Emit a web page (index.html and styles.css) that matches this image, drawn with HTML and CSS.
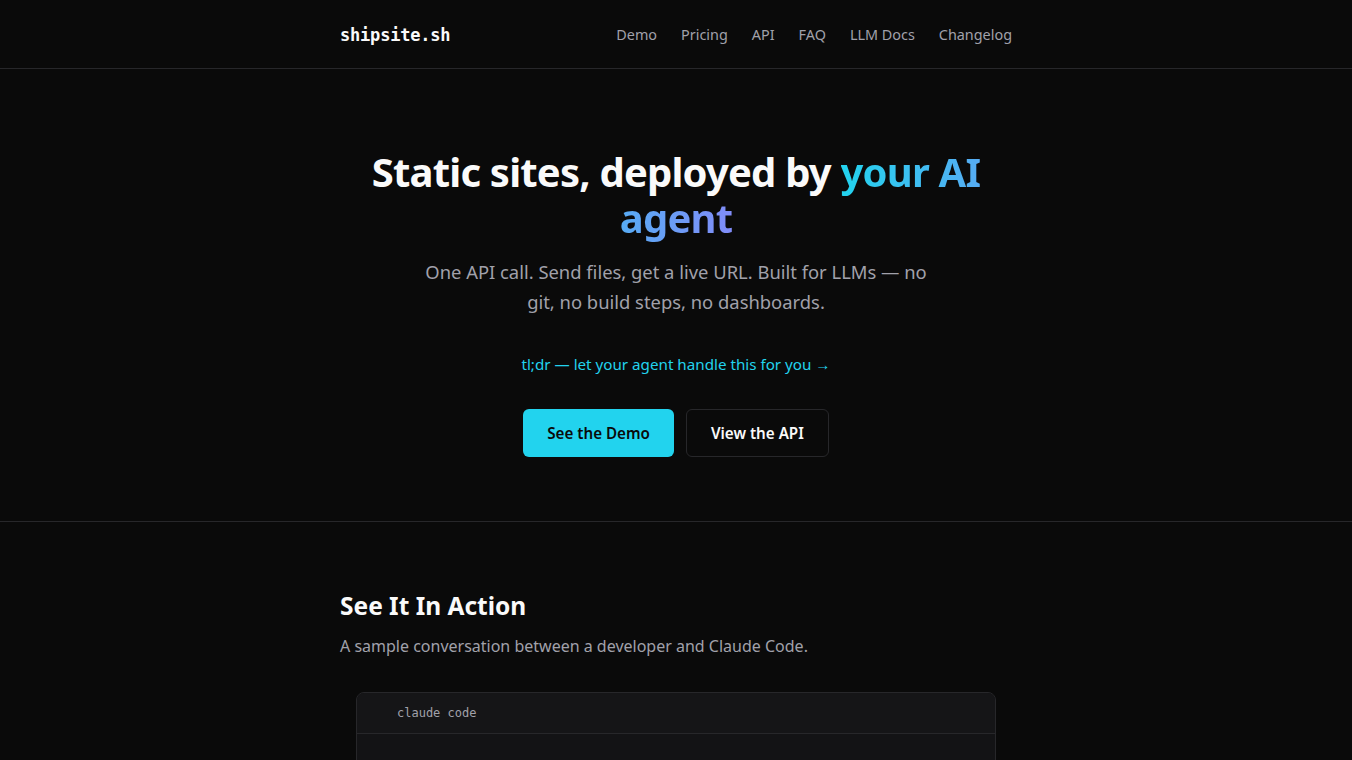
FILE: index.html
```html
<!DOCTYPE html>
<html lang="en">
<head>
<meta charset="utf-8">
<title>shipsite.sh — Static sites, deployed by your AI agent</title>
<link rel="stylesheet" href="styles.css">
</head>
<body>
<header class="site-header">
  <div class="container header-inner">
    <a class="logo" href="#">shipsite.sh</a>
    <nav class="nav">
      <a href="#demo">Demo</a>
      <a href="#pricing">Pricing</a>
      <a href="#api">API</a>
      <a href="#faq">FAQ</a>
      <a href="#llm-docs">LLM Docs</a>
      <a href="#changelog">Changelog</a>
    </nav>
  </div>
</header>

<main>
  <section class="hero">
    <div class="container hero-inner">
      <h1 class="hero-title">Static sites, deployed by <span class="gradient">your AI agent</span></h1>
      <p class="hero-sub">One API call. Send files, get a live URL. Built for LLMs — no git, no build steps, no dashboards.</p>
      <a class="tldr" href="#agent">tl;dr — let your agent handle this for you →</a>
      <div class="actions">
        <a class="btn btn-primary" href="#demo">See the Demo</a>
        <a class="btn btn-outline" href="#api">View the API</a>
      </div>
    </div>
  </section>

  <section class="demo" id="demo">
    <div class="container">
      <h2 class="section-title">See It In Action</h2>
      <p class="section-sub">A sample conversation between a developer and Claude Code.</p>
      <div class="terminal">
        <div class="terminal-bar">claude code</div>
        <div class="terminal-body"></div>
      </div>
    </div>
  </section>
</main>
</body>
</html>
```

FILE: styles.css
```css
* {
  box-sizing: border-box;
}

html,
body {
  margin: 0;
  padding: 0;
  background: #0a0a0a;
  color: #fafafa;
  font-family: "Noto Sans", "Open Sans", sans-serif;
}

a {
  text-decoration: none;
  color: inherit;
}

.container {
  width: 672px;
  margin: 0 auto;
}

/* Header */
.site-header {
  border-bottom: 1px solid #27272a;
}

.header-inner {
  height: 68px;
  display: flex;
  align-items: center;
  justify-content: space-between;
}

.logo {
  font-family: "DejaVu Sans Mono", monospace;
  font-weight: 700;
  font-size: 17px;
  color: #fafafa;
  letter-spacing: -0.2px;
  padding-top: 1px;
}

.nav {
  display: flex;
  gap: 24px;
}

.nav a {
  font-size: 14.4px;
  color: #a1a1aa;
}

/* Hero */
.hero {
  border-bottom: 1px solid #27272a;
  padding: 80px 0 64px;
}

.hero-inner {
  display: flex;
  flex-direction: column;
  align-items: center;
  text-align: center;
}

.hero-title {
  margin: 0;
  font-size: 40px;
  line-height: 46px;
  font-weight: 700;
  letter-spacing: -0.02em;
  max-width: 640px;
}

.gradient {
  background: linear-gradient(90deg, #22d3ee, #818cf8);
  -webkit-background-clip: text;
  background-clip: text;
  color: transparent;
}

.hero-sub {
  margin: 16px 0 0;
  max-width: 520px;
  font-size: 18.4px;
  line-height: 30px;
  color: #a1a1aa;
}

.tldr {
  margin-top: 35px;
  font-size: 15.2px;
  line-height: 24px;
  color: #22d3ee;
}

.actions {
  margin-top: 33px;
  display: flex;
  gap: 12px;
}

.btn {
  display: inline-flex;
  align-items: center;
  justify-content: center;
  height: 48px;
  padding: 0 24px;
  border-radius: 6px;
  font-size: 15.2px;
  font-weight: 600;
}

.btn-primary {
  background: #22d3ee;
  color: #0a0a0a;
}

.btn-outline {
  border: 1px solid #27272a;
  color: #fafafa;
}

/* Demo section */
.demo {
  padding: 68px 0 0;
}

.section-title {
  margin: 0;
  font-size: 24.5px;
  line-height: 32px;
  font-weight: 700;
}

.section-sub {
  margin: 12px 0 0;
  font-size: 16px;
  line-height: 24px;
  color: #a1a1aa;
}

.terminal {
  margin: 34px 16px 0;
  border: 1px solid #27272a;
  border-radius: 8px;
  background: #131315;
  overflow: hidden;
}

.terminal-bar {
  height: 41px;
  display: flex;
  align-items: center;
  padding-left: 40px;
  border-bottom: 1px solid #27272a;
  background: #151517;
  font-family: "DejaVu Sans Mono", monospace;
  font-size: 12px;
  color: #a1a1aa;
}

.terminal-body {
  height: 320px;
}
```
